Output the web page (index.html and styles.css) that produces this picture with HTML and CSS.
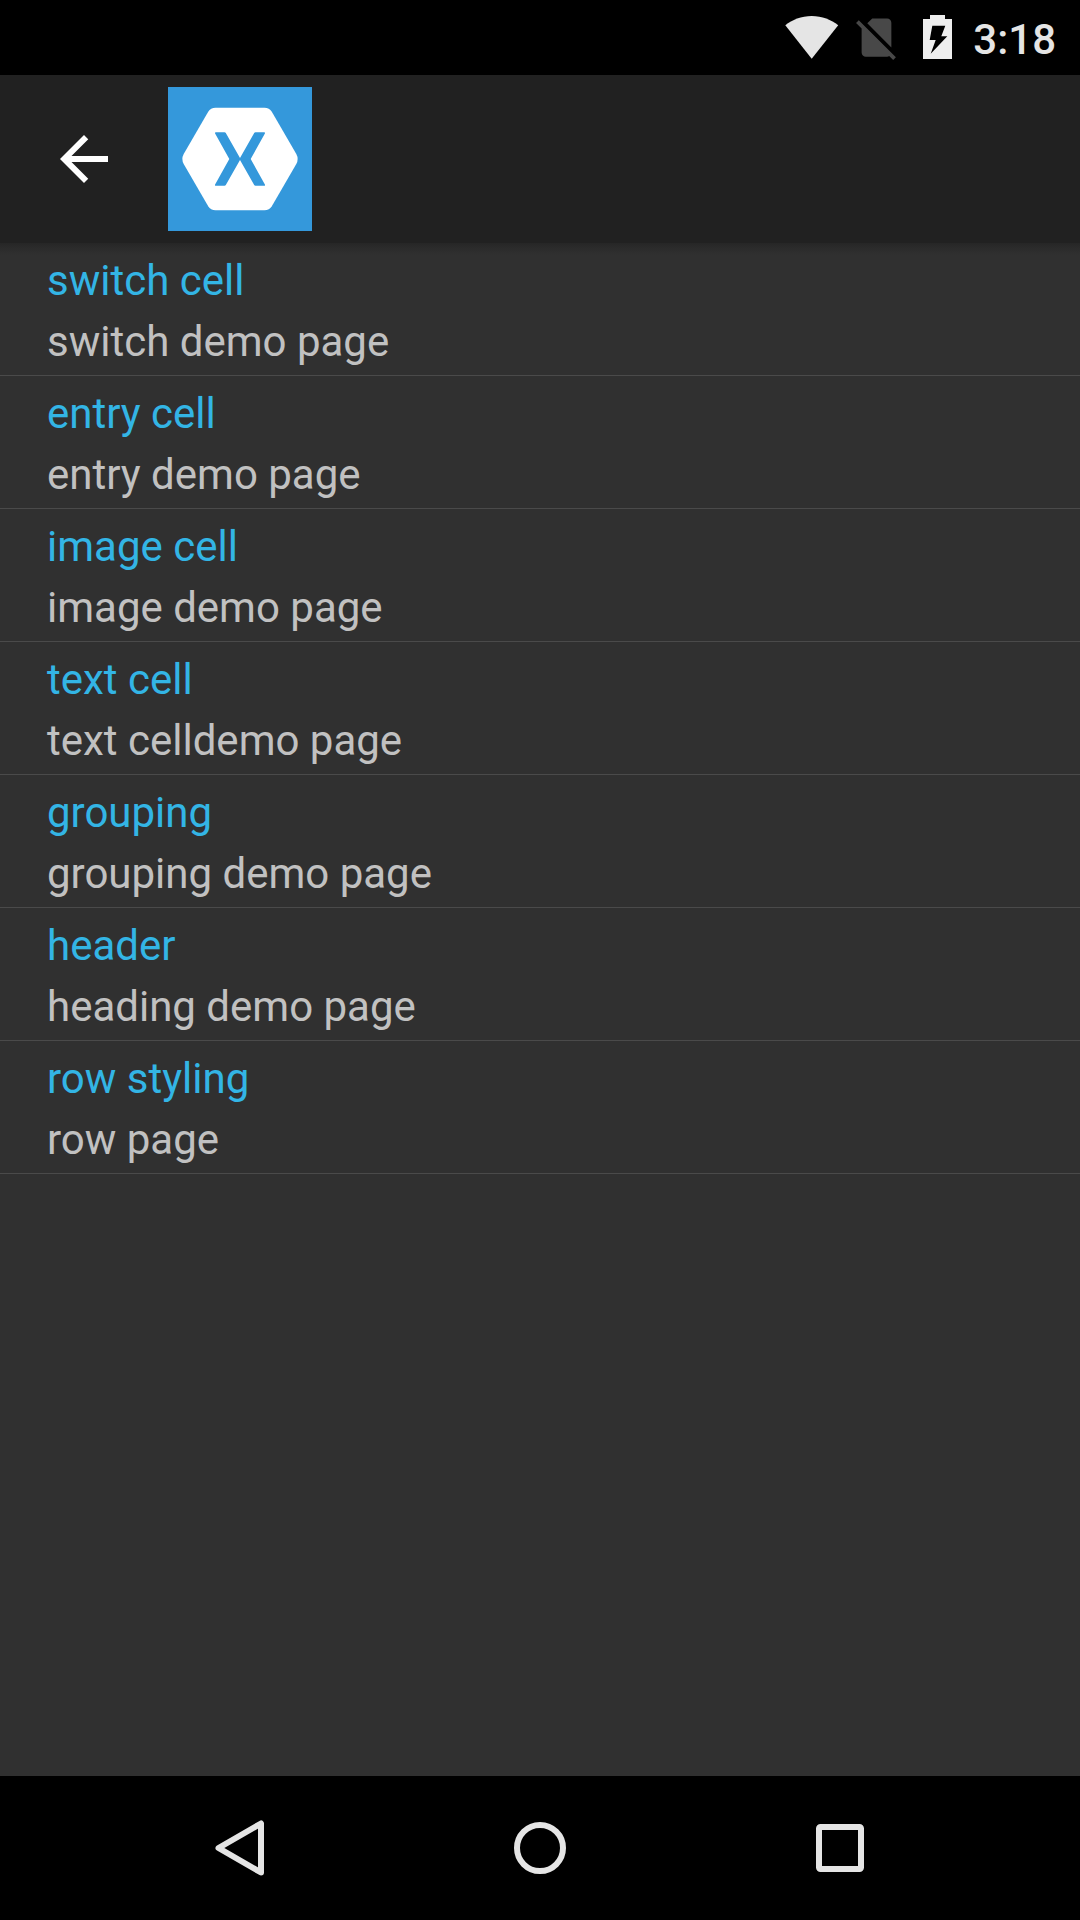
FILE: index.html
```html
<!DOCTYPE html>
<html lang="en">
<head>
<meta charset="utf-8">
<title>Cell demos</title>
<link rel="stylesheet" href="styles.css">
</head>
<body>
<div class="screen">
  <div class="status-bar">
    <svg class="wifi" viewBox="0 0 54 44" aria-hidden="true"><path d="M.3 10.3C7 4.800 16.500 1 26.700 1S46.400 4.800 53.200 10.300L26.700 43.700Z"/></svg>
    <svg class="no-sim" viewBox="0 0 24 24" aria-hidden="true"><path d="M18.990 5c0-1.100-.890-2-1.990-2h-7L7.660 5.340 19 16.680 18.990 5zM3.650 3.880L2.380 5.150 5 7.770V19c0 1.100.900 2 2 2h10.010c.350 0 .670-.100.960-.260l1.880 1.880 1.270-1.270L3.650 3.880z"/></svg>
    <svg class="battery" viewBox="0 0 29 44" aria-hidden="true"><path fill-rule="evenodd" d="M7 0H22V4H29V44H0V4H7ZM9.300 10.700L6.700 25H12.700L7.700 38.700L24.300 21.300H18.300L22.300 10.700Z"/></svg>
    <span class="clock">3:18</span>
  </div>
  <header class="app-bar">
    <svg class="back" viewBox="0 0 24 24" aria-label="Back"><path d="M20 11H7.830l5.590-5.590L12 4l-8 8 8 8 1.410-1.410L7.830 13H20v-2z"/></svg>
    <svg class="logo" viewBox="0 0 144 144" aria-hidden="true">
      <rect width="144" height="144" fill="#3498db"/>
      <path fill="#fff" d="M47.500 20.800H96.500Q101.300 20.800 103.800 24.800L128.300 67Q131 72 128.300 77L103.800 119.200Q101.300 123.200 96.500 123.200H47.500Q42.700 123.200 40.200 119.200L15.700 77Q13 72 15.700 67L40.200 24.800Q42.700 20.800 47.500 20.800Z"/>
      <path fill="#3498db" d="M48 45.200H56.500Q57.400 45.200 57.800 46L72 71L86.200 46Q86.600 45.200 87.500 45.200H96Q97.500 45.200 96.900 46.500L82.700 72L96.900 97.500Q97.500 98.800 96 98.800H87.500Q86.600 98.800 86.200 98L72 73L57.800 98Q57.400 98.800 56.500 98.800H48Q46.500 98.800 47.100 97.500L61.300 72L47.100 46.500Q46.500 45.200 48 45.200Z"/>
    </svg>
  </header>
  <main class="list">
    <div class="row"><div class="title">switch cell</div><div class="detail">switch demo page</div></div>
    <div class="row"><div class="title">entry cell</div><div class="detail">entry demo page</div></div>
    <div class="row"><div class="title">image cell</div><div class="detail">image demo page</div></div>
    <div class="row"><div class="title">text cell</div><div class="detail">text celldemo page</div></div>
    <div class="row"><div class="title">grouping</div><div class="detail">grouping demo page</div></div>
    <div class="row"><div class="title">header</div><div class="detail">heading demo page</div></div>
    <div class="row"><div class="title">row styling</div><div class="detail">row page</div></div>
  </main>
  <nav class="nav-bar">
    <svg class="key" viewBox="0 0 96 96" aria-label="Back"><path d="M69 23.500V72.500L26.500 48Z"/></svg>
    <svg class="key" viewBox="0 0 96 96" aria-label="Home"><circle cx="48" cy="48" r="23"/></svg>
    <svg class="key" viewBox="0 0 96 96" aria-label="Recents"><rect x="27" y="27" width="42" height="42" rx="1.500"/></svg>
  </nav>
</div>
</body>
</html>
```
FILE: styles.css
```css
body {
  margin: 0;
  background: #303030;
  font-family: Roboto, sans-serif;
}

.screen {
  display: flex;
  flex-direction: column;
  width: 1080px;
  height: 1920px;
  overflow: hidden;
}

.status-bar {
  display: flex;
  align-items: flex-start;
  justify-content: flex-end;
  box-sizing: border-box;
  height: 75px;
  padding-right: 24px;
  background: #000;
  color: #e5e5e5;
}

.wifi {
  width: 54px;
  height: 44px;
  margin-top: 15px;
  fill: #e5e5e5;
}

.no-sim {
  width: 51px;
  height: 51px;
  margin: 12px 0 0 12px;
  fill: #484848;
}

.battery {
  width: 29px;
  height: 44px;
  margin: 15px 0 0 21px;
  fill: #eee;
}

.clock {
  width: 84px;
  margin: 15px 0 0 20px;
  font-size: 42px;
  font-weight: 500;
  line-height: 50px;
  text-align: right;
  white-space: nowrap;
}

.app-bar {
  display: flex;
  align-items: center;
  gap: 48px;
  box-sizing: border-box;
  height: 168px;
  padding-left: 48px;
  background: #212121;
}

.back {
  width: 72px;
  height: 72px;
  fill: #fff;
}

.logo {
  width: 144px;
  height: 144px;
}

.list {
  flex: 1;
  background: linear-gradient(#262626, #2b2b2b 5px, #303030 12px);
}

.row {
  padding: 7px 45px 3px 47px;
  border-bottom: 1px solid #4a4a4a;
  font-size: 42px;
  line-height: 61px;
}

.title {
  color: #33b5e5;
}

.detail {
  color: #c1c1c1;
}

.nav-bar {
  display: flex;
  justify-content: center;
  align-items: center;
  gap: 204px;
  height: 144px;
  background: #000;
}

.key {
  width: 96px;
  height: 96px;
  fill: none;
  stroke: #e5e5e5;
  stroke-width: 6;
  stroke-linejoin: round;
}
```
